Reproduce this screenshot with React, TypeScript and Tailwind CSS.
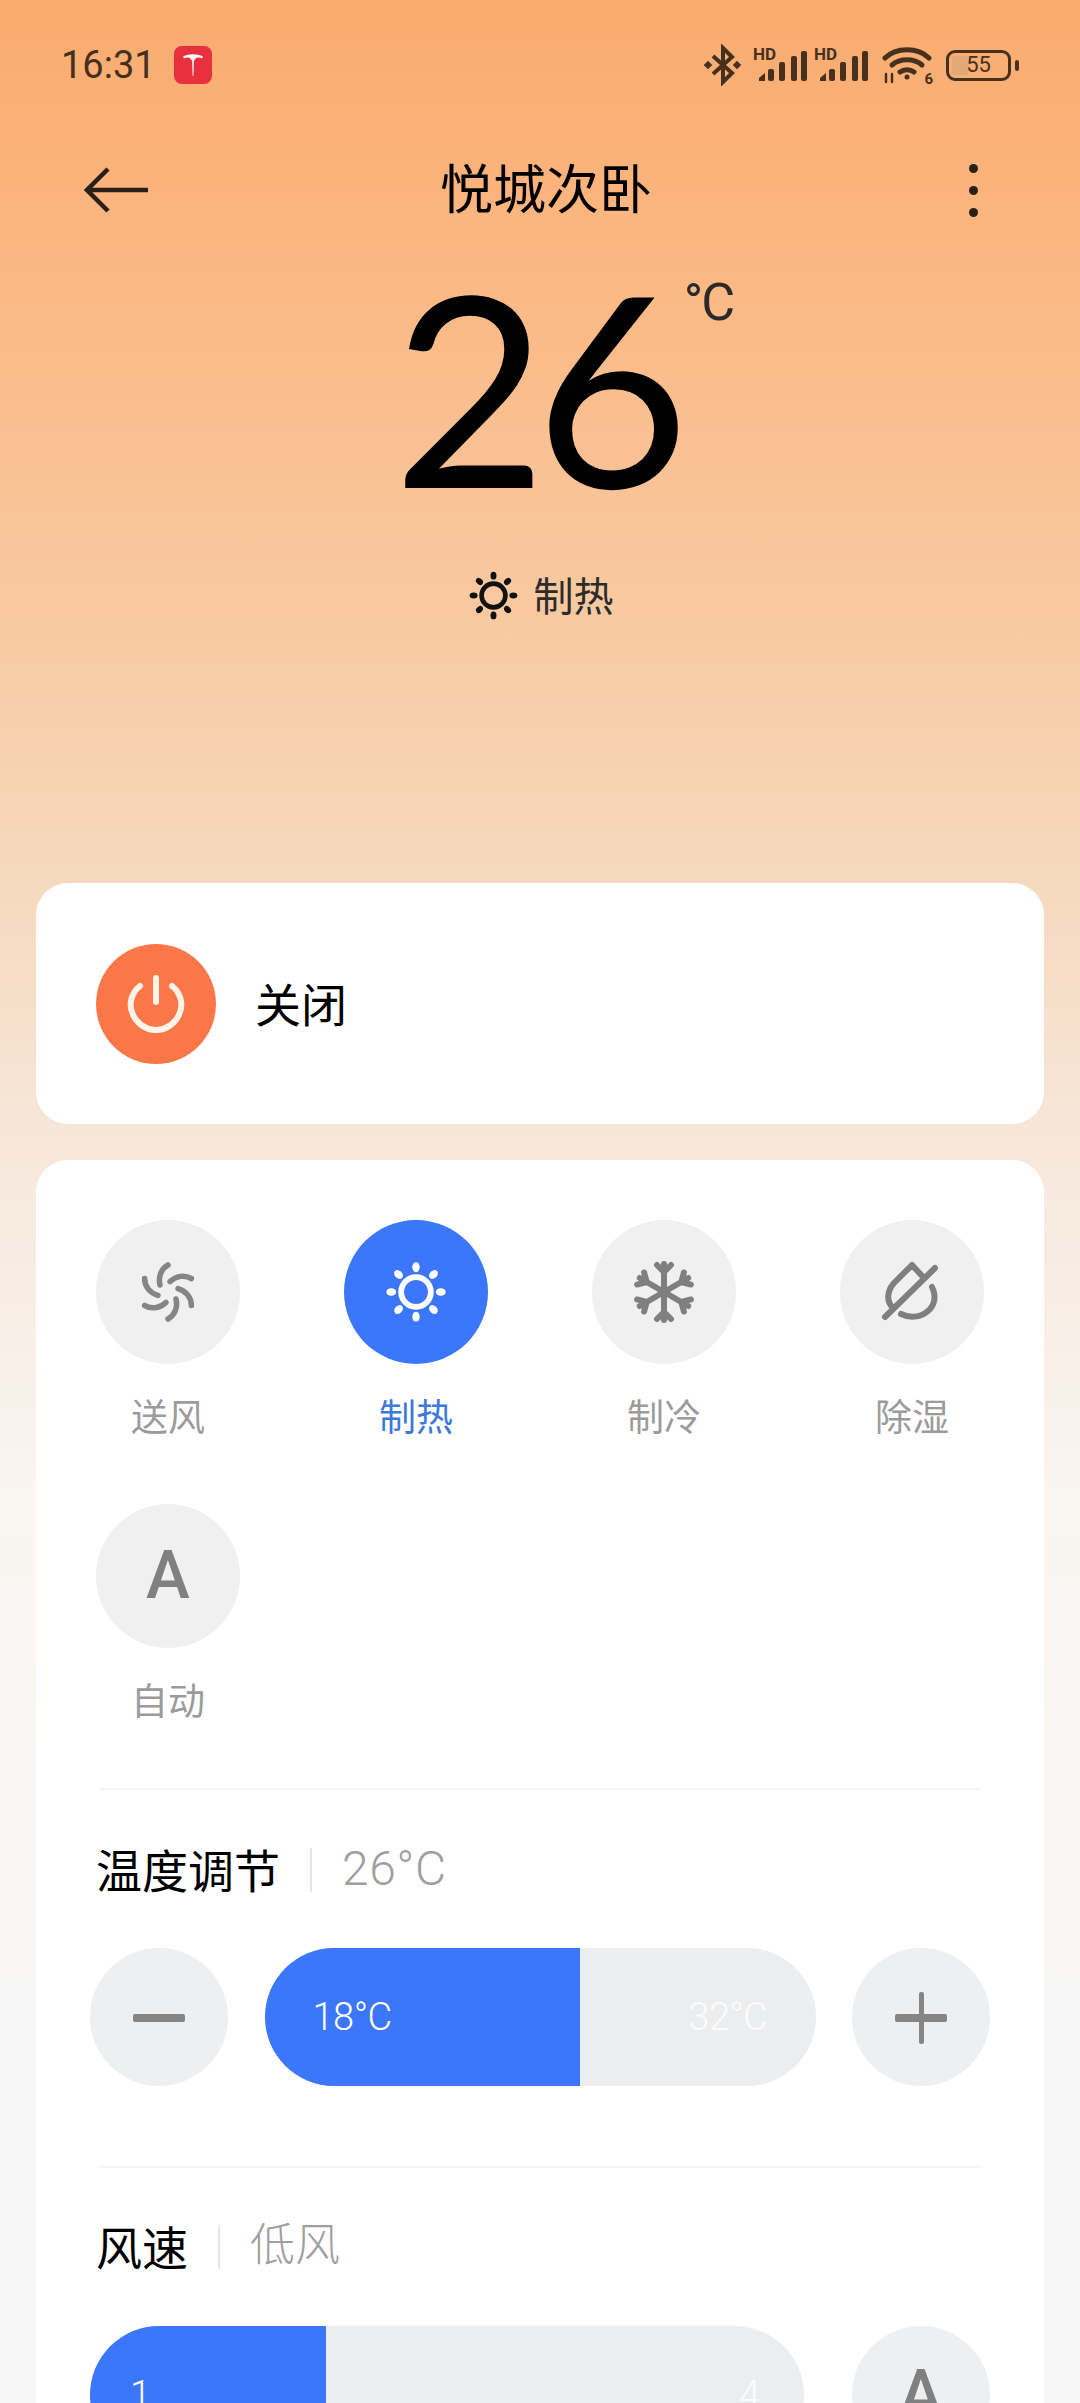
const cjk = "font-['Noto_Sans_CJK_SC','Noto_Sans',sans-serif]";

function SunIcon({ className }: { className?: string }) {
	const angles = [0, 45, 90, 135, 180, 225, 270, 315];
	return (
		<svg viewBox="0 0 80 80" className={className} fill="currentColor">
			<circle cx="40" cy="40" r="18" fill="none" stroke="currentColor" strokeWidth="7" />
			{angles.map(a => (
				<ellipse key={a} cx="40" cy="10" rx="4.500" ry="6" transform={`rotate(${a} 40 40)`} />
			))}
		</svg>
	);
}

function FanIcon() {
	return (
		<svg viewBox="0 0 80 80" className="h-[80px] w-[80px] text-[#858585]" fill="none" stroke="currentColor" strokeWidth="5.5" strokeLinecap="round">
			{[0, 60, 120, 180, 240, 300].map(a => (
				<path key={a} d="M40 13C33 17 30 25 32 33" transform={`rotate(${a} 40 40)`} />
			))}
		</svg>
	);
}

function SnowIcon() {
	return (
		<svg viewBox="0 0 80 80" className="h-[80px] w-[80px] text-[#7f7f7f]" fill="none" stroke="currentColor" strokeWidth="6" strokeLinecap="round" strokeLinejoin="round">
			{[0, 60, 120, 180, 240, 300].map(a => (
				<path key={a} d="M40 40V12M40 20L33 13M40 20L47 13" transform={`rotate(${a} 40 40)`} />
			))}
		</svg>
	);
}

function DryIcon() {
	return (
		<svg viewBox="0 0 80 80" className="h-[80px] w-[80px] text-[#7f7f7f]" fill="none" stroke="currentColor" strokeWidth="6" strokeLinecap="round" strokeLinejoin="round">
			<path d="M13 65L63 16" />
			<path d="M52 26L40 13L22 31C15 39 14 49 21 56" />
			<path d="M60 35C65 45 62 54 56 59C48 66 37 66 29 62" />
		</svg>
	);
}

function SignalIcon() {
	return (
		<span className="relative block h-[34px] w-[55px]">
			<span className="absolute left-0 top-[-2px] font-['Roboto',sans-serif] text-[17px] font-bold leading-[17px] text-[#46301e]">HD</span>
			<svg viewBox="0 0 55 34" className="absolute inset-0 h-[34px] w-[55px]" fill="#46301e">
				<path d="M6 33v-3l6-5v8z" />
				<rect x="15" y="21" width="6" height="12" rx="2" />
				<rect x="26" y="14" width="6" height="19" rx="2" />
				<rect x="38" y="8" width="6" height="25" rx="2" />
				<rect x="48" y="3" width="6" height="30" rx="2" />
			</svg>
		</span>
	);
}

function StatusIcons() {
	return (
		<div className="flex items-center text-[#46301e]">
			<svg viewBox="0 0 38 42" className="mr-[11px] h-[42px] w-[38px]" fill="none" stroke="currentColor" strokeWidth="4">
				<path d="M9 12L28 29L19 38V4L28 13L9 30" />
				<rect x="1" y="18" width="6" height="6" transform="rotate(45 4 21)" fill="currentColor" stroke="none" />
				<rect x="30" y="18" width="6" height="6" transform="rotate(45 33 21)" fill="currentColor" stroke="none" />
			</svg>
			<SignalIcon />
			<span className="ml-[6px]">
				<SignalIcon />
			</span>
			<span className="relative ml-[13px] block h-[38px] w-[50px]">
				<svg viewBox="0 0 50 38" className="h-[38px] w-[50px]" fill="none" stroke="currentColor" strokeWidth="5" strokeLinecap="round">
					<path d="M3 12C14 1 36 1 47 12" />
					<path d="M10 19C18 12 32 12 40 19" />
					<path d="M18 26C22 23 28 23 32 26" />
					<circle cx="25" cy="31" r="2.5" fill="currentColor" stroke="none" />
					<path d="M4 28v8M10 28v8" strokeWidth="2.5" />
				</svg>
				<span className="absolute bottom-[-3px] right-[-1px] font-['Roboto',sans-serif] text-[15px] font-bold leading-[16px]">6</span>
			</span>
			<span className="relative ml-[14px] flex h-[31px] w-[65px] items-center justify-center rounded-[9px] border-[3px] border-current font-['Roboto',sans-serif] text-[22px] leading-none">
				<span className="absolute inset-y-[3px] left-[3px] w-[17px] rounded-[3px] bg-[#e2a877]" />
				<span className="relative">55</span>
				<span className="absolute right-[-11px] h-[11px] w-[4px] rounded-[2px] bg-current" />
			</span>
			<span className="w-[11px]" />
		</div>
	);
}

function ModeButton({ label, active, children }: { label: string; active?: boolean; children: React.ReactNode }) {
	return (
		<div className="flex w-[144px] flex-col items-center">
			<div className={active ? "flex h-[144px] w-[144px] items-center justify-center rounded-full bg-[#3b76fb] text-white" : "flex h-[144px] w-[144px] items-center justify-center rounded-full bg-[#f0f0f1]"}>
				{children}
			</div>
			<span className={active ? `mt-[27px] h-[51px] text-[37px] leading-[48px] text-[#3e78d8] ${cjk}` : `mt-[27px] h-[51px] text-[37px] leading-[48px] text-[#9b9b9b] ${cjk}`}>
				{label}
			</span>
		</div>
	);
}

function SectionTitle({ title, value, valueClass }: { title: string; value: string; valueClass: string }) {
	return (
		<div className="flex h-[60px] items-center">
			<span className={`pb-[3px] text-[46px] leading-[55px] text-black ${cjk}`}>{title}</span>
			<span className="mx-[30px] h-[44px] w-[2px] bg-[#e6e6e6]" />
			<span className={`pb-[3px] font-light leading-[57px] text-[#9f9f9f] font-['Roboto','Noto_Sans_CJK_SC',sans-serif] ${valueClass}`}>{value}</span>
		</div>
	);
}

function RoundButton({ children }: { children: React.ReactNode }) {
	return <div className="flex h-[138px] w-[138px] shrink-0 items-center justify-center rounded-full bg-[#eeeff0]">{children}</div>;
}

export default function App() {
	return (
		<div className="flex h-[2403px] w-[1080px] flex-col overflow-hidden bg-[linear-gradient(180deg,#faab6e_0%,#fbb680_10%,#f8cba4_27%,#f6d8bc_36%,#f7e9dd_49%,#f9f5f1_62%,#f7f7f7_88%)]">
			{/* Status bar */}
			<div className="flex h-[130px] shrink-0 items-center justify-between pl-[61px] pr-[58px]">
				<div className="flex items-center">
					<span className="font-['Roboto',sans-serif] text-[38px] leading-none text-[#46301e]">16:31</span>
					<span className="ml-[18px] flex h-[38px] w-[38px] items-center justify-center rounded-[8px] bg-[#e8303f]">
						<svg viewBox="0 0 24 24" className="h-[26px] w-[26px]" fill="white">
							<path d="M3 4C8 1.500 16 1.500 21 4L20.500 6C18 5 16.500 5 15 5.500L12.800 8L12.400 22H11.600L11.200 8L9 5.500C7.500 5 6 5 3.500 6Z" />
						</svg>
					</span>
				</div>
				<StatusIcons />
			</div>

			{/* Nav */}
			<div className="relative flex h-[120px] shrink-0 items-center justify-between pl-[84px] pr-[102px]">
				<svg viewBox="0 0 64 46" className="h-[46px] w-[64px]" fill="none" stroke="#2a2018" strokeWidth="4.500">
					<path d="M64 23H3M24 2L3 23L24 44" />
				</svg>
				<span className={`absolute inset-x-0 top-[30px] pl-[12px] text-center text-[53px] leading-none text-black ${cjk}`}>悦城次卧</span>
				<div className="flex flex-col gap-[13px]">
					<span className="h-[9px] w-[9px] rounded-full bg-[#2a2018]" />
					<span className="h-[9px] w-[9px] rounded-full bg-[#2a2018]" />
					<span className="h-[9px] w-[9px] rounded-full bg-[#2a2018]" />
				</div>
			</div>

			{/* Temperature */}
			<div className="flex h-[270px] shrink-0 items-center justify-center">
				<div className="relative -translate-x-[5px]">
					<span className="block font-['Lato',sans-serif] text-[266px] leading-[262px] tracking-[-12px] text-black">26</span>
					<span className="absolute left-[291px] top-[23px] font-['Roboto',sans-serif] text-[52px] leading-none tracking-[-2px] text-[#2a2a2a]">°C</span>
				</div>
			</div>
			<div className="mt-[45px] flex h-[60px] shrink-0 items-center justify-center gap-[14px] text-[#2b2b2b]">
				<SunIcon className="h-[53px] w-[53px] text-[#111]" />
				<span className={`pb-[3px] text-[40px] leading-none ${cjk}`}>制热</span>
			</div>

			{/* Power */}
			<div className="mx-[36px] mt-[258px] flex h-[241px] shrink-0 items-center rounded-[32px] bg-white pl-[60px]">
				<div className="flex h-[120px] w-[120px] items-center justify-center rounded-full bg-[#fc7747]">
					<svg viewBox="0 0 60 60" className="h-[60px] w-[60px]" fill="none" stroke="#fff3ea" strokeWidth="6" strokeLinecap="round">
						<path d="M30 4V28" />
						<path d="M14 12C5 19 3 30 6 38C9 48 19 56 30 56C41 56 51 48 54 38C57 30 55 19 46 12" />
					</svg>
				</div>
				<span className={`ml-[39px] pb-[3px] text-[46px] leading-none text-black ${cjk}`}>关闭</span>
			</div>

			{/* Controls */}
			<div className="mx-[36px] mt-[36px] shrink-0 rounded-t-[32px] bg-white px-[60px] pt-[60px]">
				<div className="grid grid-cols-[repeat(4,144px)] justify-between gap-y-[62px]">
					<ModeButton label="送风">
						<FanIcon />
					</ModeButton>
					<ModeButton label="制热" active>
						<SunIcon className="h-[66px] w-[66px]" />
					</ModeButton>
					<ModeButton label="制冷">
						<SnowIcon />
					</ModeButton>
					<ModeButton label="除湿">
						<DryIcon />
					</ModeButton>
					<ModeButton label="自动">
						<span className="font-['Roboto',sans-serif] text-[66px] font-medium leading-none text-[#808080]">A</span>
					</ModeButton>
				</div>

				<div className="mx-[4px] mt-[62px] h-[2px] bg-[#f4f4f4]" />

				<div className="mt-[50px]">
					<SectionTitle title="温度调节" value="26°C" valueClass="text-[48px] tracking-[0.5px]" />
				</div>
				<div className="-mx-[6px] mt-[48px] flex items-center justify-between">
					<RoundButton>
						<span className="mt-[2px] h-[8px] w-[52px] rounded-[2px] bg-[#858585]" />
					</RoundButton>
					<div className="relative flex h-[138px] w-[551px] items-center justify-between overflow-hidden rounded-full bg-[#ecedee] px-[48px] font-['Roboto',sans-serif] text-[38px] font-light leading-none tracking-[-0.5px]">
						<span className="absolute inset-y-0 left-0 w-[315px] bg-[#3b76fb]" />
						<span className="relative text-white">18°C</span>
						<span className="relative text-white/80">32°C</span>
					</div>
					<RoundButton>
						<span className="relative mt-[2px] flex h-[52px] w-[52px] items-center justify-center">
							<span className="absolute h-[8px] w-[52px] rounded-[2px] bg-[#858585]" />
							<span className="absolute h-[52px] w-[5px] rounded-[2px] bg-[#858585]" />
						</span>
					</RoundButton>
				</div>

				<div className="mx-[4px] mt-[80px] h-[2px] bg-[#f4f4f4]" />

				<div className="mt-[49px]">
					<SectionTitle title="风速" value="低风" valueClass="text-[45px]" />
				</div>
				<div className="-mx-[6px] mt-[49px] flex items-center justify-between">
					<div className="relative flex h-[138px] w-[714px] items-center justify-between overflow-hidden rounded-full bg-[#ecedee] pl-[40px] pr-[44px] font-['Roboto',sans-serif] text-[38px] font-light leading-none">
						<span className="absolute inset-y-0 left-0 w-[236px] bg-[#3b76fb]" />
						<span className="relative text-white">1</span>
						<span className="relative text-white/80">4</span>
					</div>
					<RoundButton>
						<span className="font-['Roboto',sans-serif] text-[66px] font-medium leading-none text-[#808080]">A</span>
					</RoundButton>
				</div>
			</div>
		</div>
	);
}
